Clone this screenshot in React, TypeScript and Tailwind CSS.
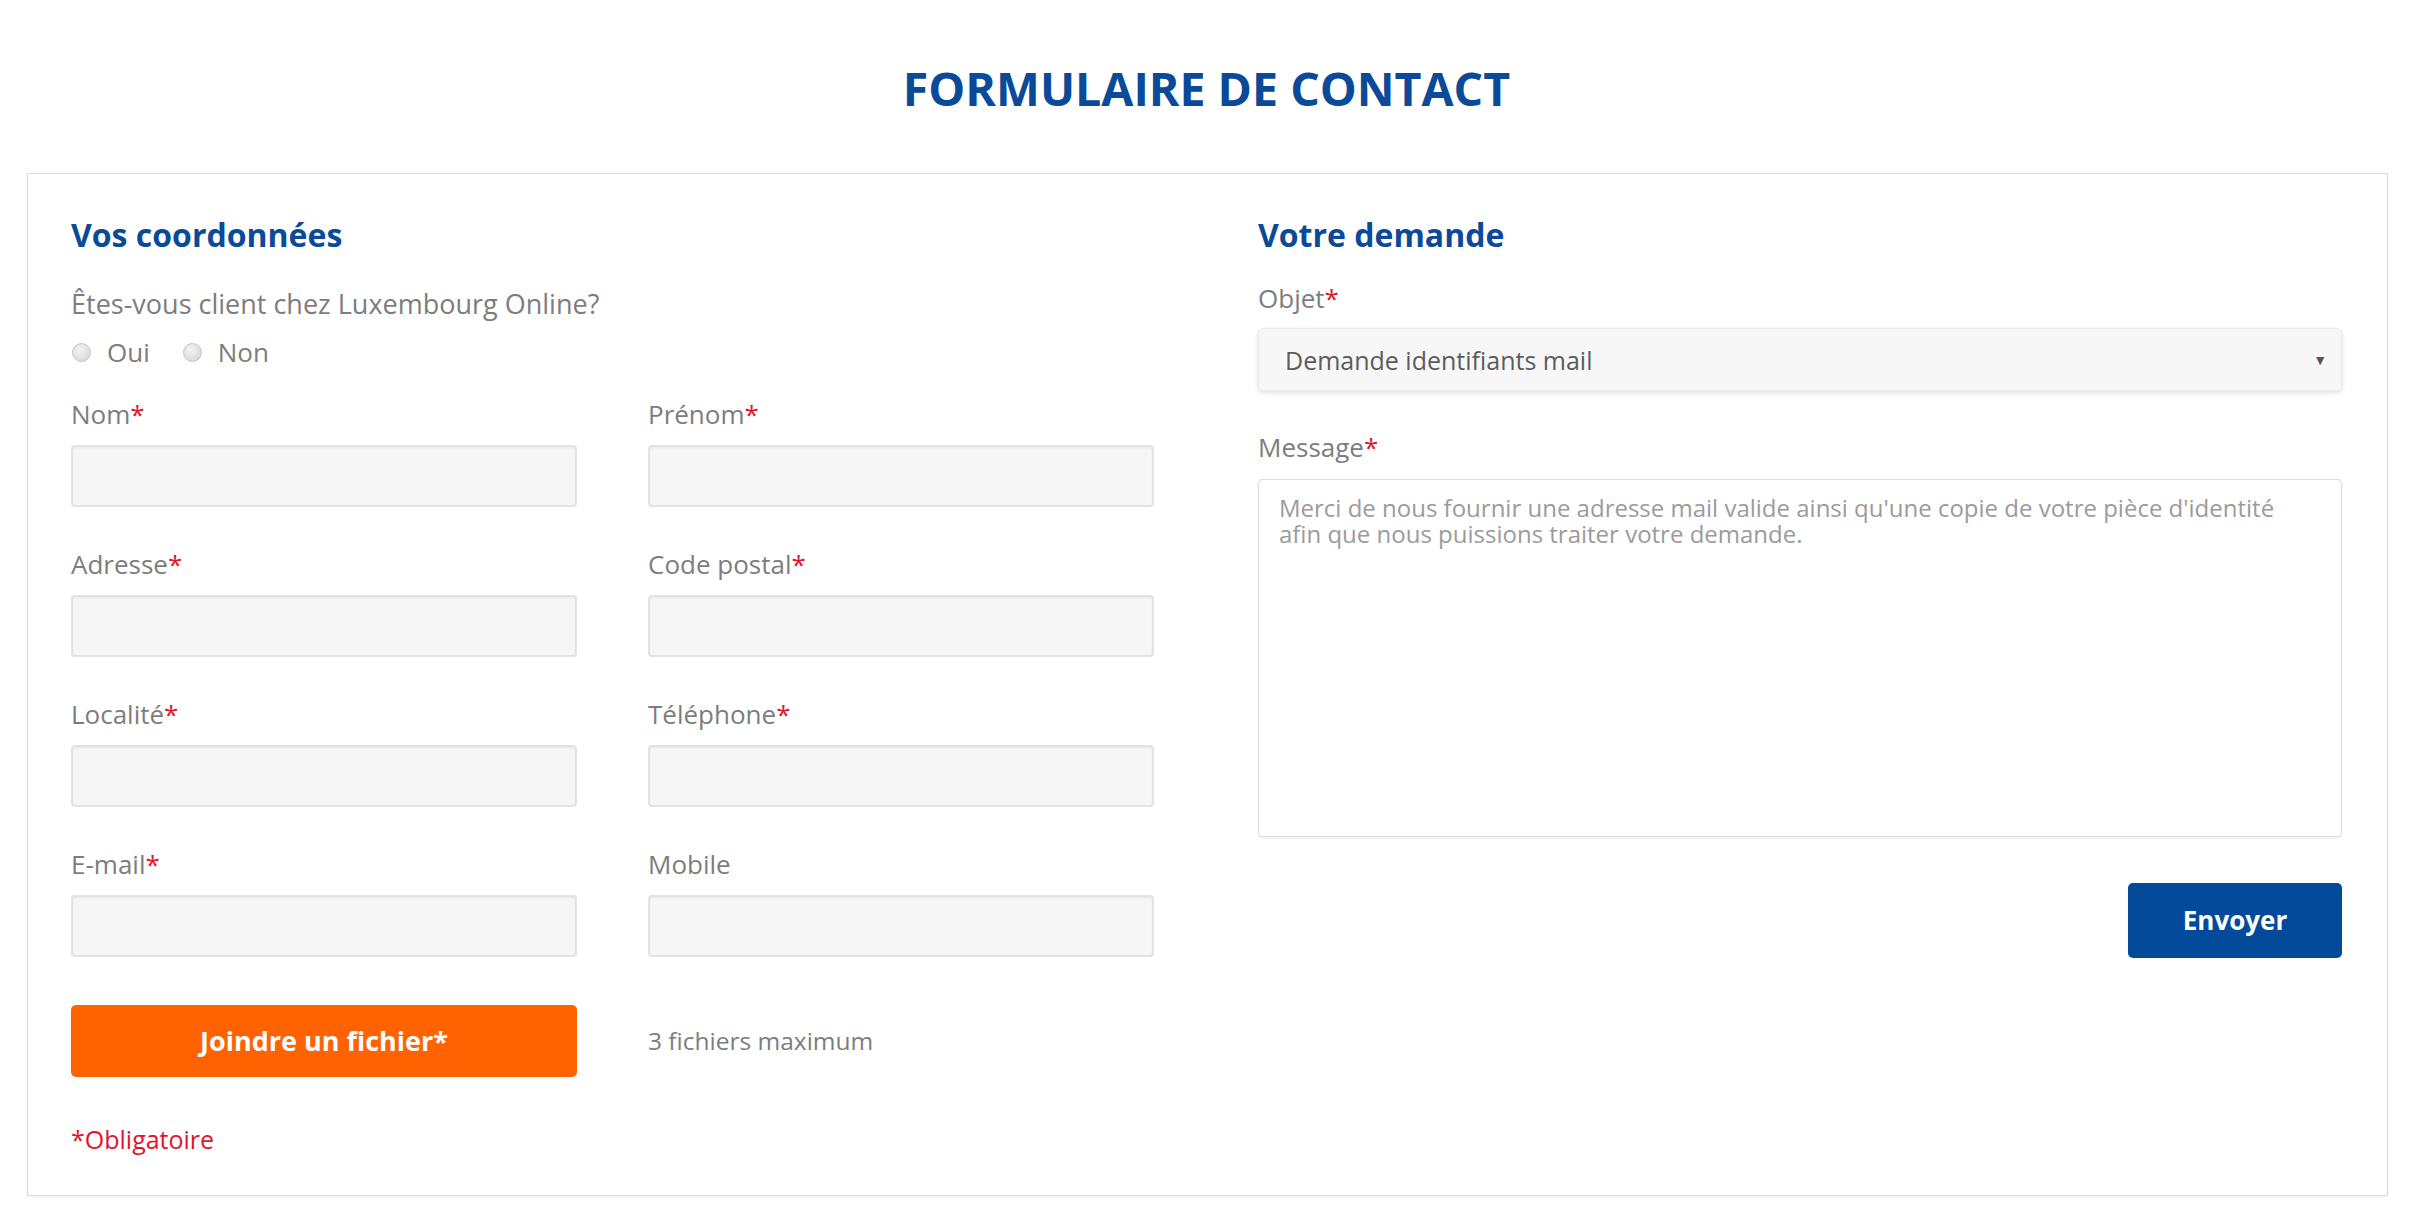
import React from "react";

const Req = () => <span className="text-[#e3132c]">*</span>;

function Field({ label, required }: { label: string; required?: boolean }) {
  return (
    <div className="flex flex-col">
      <label className="text-[26px] leading-[30px] text-[#7d7d7d]">
        {label}
        {required && <Req />}
      </label>
      <input
        type="text"
        className="mt-[16px] h-[62px] w-full rounded-[4px] border-2 border-[#e3e3e3] bg-[#f6f6f6] shadow-[inset_0_1px_2px_rgba(0,0,0,0.06)] outline-none"
      />
    </div>
  );
}

function Radio({ label }: { label: string }) {
  return (
    <label className="flex items-center gap-[16px]">
      <span className="inline-block h-[19px] w-[19px] rounded-full border border-[#c4c4c4] bg-[radial-gradient(circle_at_40%_35%,#f4f4f4,#d2d2d2)]" />
      <span className="text-[26px] leading-[30px] text-[#7d7d7d]">{label}</span>
    </label>
  );
}

export default function App() {
  return (
    <div className="min-h-screen bg-white font-['Open_Sans',sans-serif]">
      <h1 className="pr-[10px] pt-[60px] text-center text-[46.5px] font-bold leading-[56px] text-[#0a4a99]">
        FORMULAIRE DE CONTACT
      </h1>

      <div className="ml-[27px] mt-[57px] w-[2361px] border border-[#dcdcdc] pb-[41px] pl-[43px] pr-[45px] pt-[43px] shadow-[0_1px_2px_rgba(0,0,0,0.06)]">
        <div className="grid grid-cols-[1083px_1084px] gap-x-[104px]">
          {/* Left column */}
          <div className="flex flex-col">
            <h2 className="text-[32px] font-bold leading-[36px] text-[#0a4a99]">
              Vos coordonnées
            </h2>
            <p className="mt-[36px] text-[27px] leading-[30px] text-[#7d7d7d]">
              Êtes-vous client chez Luxembourg Online?
            </p>
            <div className="mt-[18px] flex h-[30px] items-center gap-[33px] pl-[1px]">
              <Radio label="Oui" />
              <Radio label="Non" />
            </div>

            <div className="mt-[32px] grid grid-cols-2 gap-x-[71px] gap-y-[42px]">
              <Field label="Nom" required />
              <Field label="Prénom" required />
              <Field label="Adresse" required />
              <Field label="Code postal" required />
              <Field label="Localité" required />
              <Field label="Téléphone" required />
              <Field label="E-mail" required />
              <Field label="Mobile" />
            </div>

            <div className="mt-[48px] grid grid-cols-2 items-center gap-x-[71px]">
              <button className="h-[72px] rounded-[5px] bg-[#ff6200] text-[27px] font-bold text-white">
                Joindre un fichier*
              </button>
              <span className="text-[24.5px] leading-[30px] text-[#7d7d7d]">3 fichiers maximum</span>
            </div>

            <p className="mt-[47px] text-[25px] leading-[30px] text-[#e3132c]">*Obligatoire</p>
          </div>

          {/* Right column */}
          <div className="flex flex-col">
            <h2 className="text-[32px] font-bold leading-[36px] text-[#0a4a99]">
              Votre demande
            </h2>
            <label className="mt-[30px] text-[26px] leading-[30px] text-[#7d7d7d]">
              Objet
              <Req />
            </label>
            <div className="mt-[15px] flex h-[63px] items-center justify-between rounded-[5px] border border-[#ececec] bg-[#f7f7f7] pl-[26px] pr-[14px] shadow-[0_2px_5px_rgba(0,0,0,0.12)]">
              <span className="text-[25px] leading-[30px] text-[#5c5c5c]">Demande identifiants mail</span>
              <span className="text-[14px] leading-none text-[#555]">▼</span>
            </div>
            <label className="mt-[41px] text-[26px] leading-[30px] text-[#7d7d7d]">
              Message
              <Req />
            </label>
            <textarea
              className="mt-[17px] h-[358px] w-full resize-none rounded-[4px] border border-[#dedede] bg-white px-[20px] pt-[15px] text-[24px] leading-[26px] text-[#555] shadow-[0_2px_2px_rgba(0,0,0,0.06)] outline-none placeholder:text-[#9b9b9b]"
              placeholder="Merci de nous fournir une adresse mail valide ainsi qu'une copie de votre pièce d'identité afin que nous puissions traiter votre demande."
            />
            <button className="mt-[46px] h-[75px] w-[214px] self-end rounded-[5px] bg-[#034a9b] text-[26px] font-bold text-white">
              Envoyer
            </button>
          </div>
        </div>
      </div>
    </div>
  );
}
